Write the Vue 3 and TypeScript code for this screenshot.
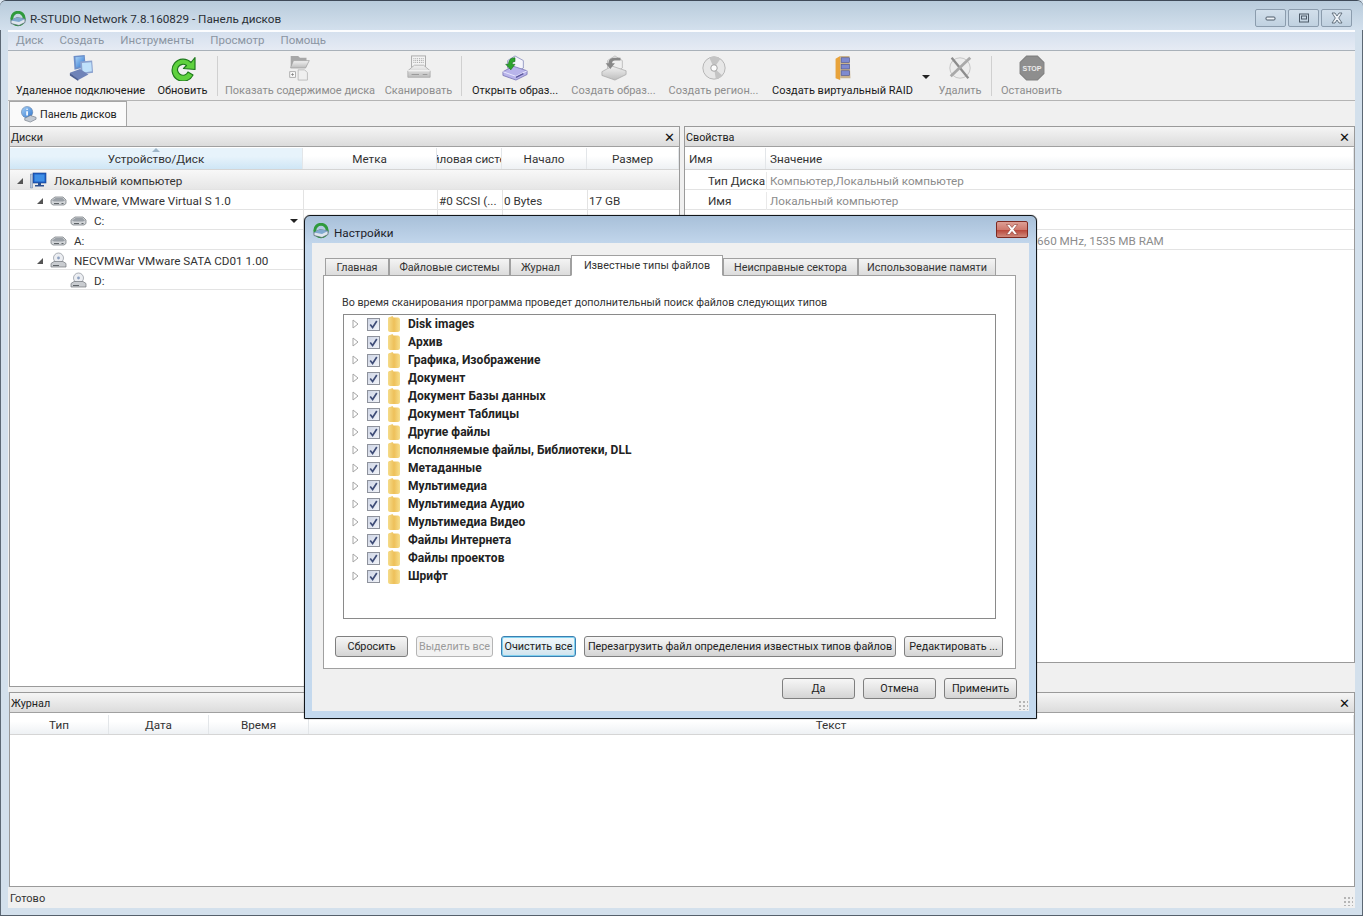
<script setup lang="ts">
interface ToolItem {
  label?: string
  icon?: string
  width: number
  off?: boolean
  kind?: 'sep' | 'arrow'
}

interface DiskRow {
  name: string
  icon?: string
  level: number
  open?: boolean
  cells?: string[]
  dropdown?: boolean
  head?: boolean
}

const menu = ['Диск', 'Создать', 'Инструменты', 'Просмотр', 'Помощь']

const tools: ToolItem[] = [
  { label: 'Удаленное подключение', icon: 'i-remote', width: 141 },
  { label: 'Обновить', icon: 'i-refresh', width: 63 },
  { kind: 'sep', width: 7 },
  { label: 'Показать содержимое диска', icon: 'i-show', width: 158, off: true },
  { label: 'Сканировать', icon: 'i-scan', width: 79, off: true },
  { kind: 'sep', width: 7 },
  { label: 'Открыть образ...', icon: 'i-open', width: 100 },
  { label: 'Создать образ...', icon: 'i-image', width: 97, off: true },
  { label: 'Создать регион...', icon: 'i-disc', width: 103, off: true },
  { label: 'Создать виртуальный RAID', icon: 'i-raid', width: 155 },
  { kind: 'arrow', width: 12 },
  { label: 'Удалить', icon: 'i-delete', width: 56, off: true },
  { kind: 'sep', width: 7 },
  { label: 'Остановить', icon: 'i-stop', width: 73, off: true },
]

const diskRows: DiskRow[] = [
  { name: 'Локальный компьютер', icon: 'i-monitor', level: 0, open: true, head: true },
  { name: 'VMware, VMware Virtual S 1.0', icon: 'i-hdd', level: 1, open: true, cells: ['', '#0 SCSI (...', '0 Bytes', '17 GB'] },
  { name: 'C:', icon: 'i-hdd', level: 2, dropdown: true },
  { name: 'A:', icon: 'i-hdd', level: 1 },
  { name: 'NECVMWar VMware SATA CD01 1.00', icon: 'i-cd', level: 1, open: true },
  { name: 'D:', icon: 'i-cd', level: 2 },
]

const dialogTabs = [
  { label: 'Главная', width: 64 },
  { label: 'Файловые системы', width: 121 },
  { label: 'Журнал', width: 61 },
  { label: 'Известные типы файлов', width: 152, active: true },
  { label: 'Неисправные сектора', width: 135 },
  { label: 'Использование памяти', width: 138 },
]

const fileTypes = [
  'Disk images',
  'Архив',
  'Графика, Изображение',
  'Документ',
  'Документ Базы данных',
  'Документ Таблицы',
  'Другие файлы',
  'Исполняемые файлы, Библиотеки, DLL',
  'Метаданные',
  'Мультимедиа',
  'Мультимедиа Аудио',
  'Мультимедиа Видео',
  'Файлы Интернета',
  'Файлы проектов',
  'Шрифт',
]

const listButtons = [
  { label: 'Сбросить', width: 73 },
  { label: 'Выделить все', width: 77, off: true },
  { label: 'Очистить все', width: 75, focus: true },
  { label: 'Перезагрузить файл определения известных типов файлов', width: 312 },
  { label: 'Редактировать ...', width: 99 },
]
</script>

<template>
  <div class="window">
    <svg class="defs" aria-hidden="true">
      <defs>
        <linearGradient id="g-grey" x1="0" y1="0" x2="0" y2="1">
          <stop offset="0" stop-color="#f2f2f2" />
          <stop offset="1" stop-color="#b5b5b5" />
        </linearGradient>
        <linearGradient id="g-folder" x1="0" y1="0" x2="1" y2="0">
          <stop offset="0" stop-color="#f5dc8a" />
          <stop offset="0.5" stop-color="#eec05a" />
          <stop offset="1" stop-color="#f6de8c" />
        </linearGradient>
        <linearGradient id="g-check" x1="0" y1="0" x2="1" y2="1">
          <stop offset="0" stop-color="#cdd4e4" />
          <stop offset="1" stop-color="#f3f5fa" />
        </linearGradient>
        <linearGradient id="g-blue" x1="0" y1="0" x2="1" y2="1">
          <stop offset="0" stop-color="#a9d2f7" />
          <stop offset="1" stop-color="#2f76cf" />
        </linearGradient>
      </defs>

      <symbol id="i-app" viewBox="0 0 16 16">
        <circle cx="8" cy="7.500" r="6.200" fill="none" stroke="#2f9a3c" stroke-width="3" />
        <path d="M1 9.500l6-3 8 1.500v3.500l-6 3-8-2z" fill="#dfe6ee" stroke="#51606e" stroke-width=".7" />
        <path d="M7 6.500l8 1.500-6 3-8-1.500z" fill="#7fa9cf" />
      </symbol>

      <symbol id="i-remote" viewBox="0 0 28 28">
        <path d="M6 1l12-1 1 13-12 3z" fill="#6c8fc9" />
        <path d="M8 2.500l9-.8 .7 9.800-9 2z" fill="url(#g-blue)" />
        <path d="M13 7l13-1 1 13-13 2z" fill="#8ba2cf" />
        <path d="M15 8.500l10-.8 .7 9.800-10 1.600z" fill="#bfe1fb" />
        <path d="M2 19l11-4 9 6-11 6z" fill="#6f83b8" />
        <path d="M2 19v3l9 6v-2z" fill="#4d5f92" />
      </symbol>

      <symbol id="i-refresh" viewBox="0 0 26 26">
        <path d="M21 7.500A11 11 0 1 0 23 20l-5-3a5.500 5.500 0 1 1-1.500-6.500l-3 3L25 14.500V2.500z" fill="#5fd23e" stroke="#1f7a1d" stroke-width="1.200" stroke-linejoin="round" />
      </symbol>

      <symbol id="i-show" viewBox="0 0 28 28">
        <path d="M4 1h8l2 2h7v9H4z" fill="#9b9b9b" />
        <path d="M4 13l3-7h17l-4 8H4z" fill="url(#g-grey)" stroke="#8a8a8a" stroke-width=".7" />
        <rect x="3" y="18" width="6" height="6" fill="#fff" stroke="#888" stroke-width=".8" />
        <path d="M4.500 21h3M6 19.500v3" stroke="#666" stroke-width=".8" />
        <path d="M12 16h7l3 3v8H12z" fill="#efefef" stroke="#a5a5a5" stroke-width=".8" />
      </symbol>

      <symbol id="i-scan" viewBox="0 0 28 28">
        <rect x="6" y="1" width="15" height="12" fill="#f4f4f4" stroke="#9b9b9b" />
        <path d="M8 4h11M8 6h11M8 8h11" stroke="#8b8b8b" stroke-dasharray="1 1" />
        <path d="M2 17l7-6h10l7 6v7H2z" fill="url(#g-grey)" stroke="#9a9a9a" stroke-width=".8" />
        <path d="M2 17h24" stroke="#fff" />
        <path d="M6 21h8M18 21h5" stroke="#888" />
      </symbol>

      <symbol id="i-open" viewBox="0 0 28 28">
        <path d="M6 6l8-5 9 5v8L14 19 6 14z" fill="#f4f4fb" stroke="#7f85b8" stroke-width=".8" />
        <path d="M1 18l11-6 15 5v4l-12 6-14-5z" fill="#b8b4ea" stroke="#6f6bb0" stroke-width=".8" />
        <path d="M1 18l14 5 12-6" fill="none" stroke="#eceaff" />
        <path d="M15 24l8-4" stroke="#5a569c" stroke-width="1.500" />
        <path d="M14 3c-5 0-7 3-7 7H4l5.500 6L14 10h-3c0-2 1-3 3-3z" fill="#2ea52e" stroke="#14691a" stroke-width=".6" />
      </symbol>

      <symbol id="i-image" viewBox="0 0 28 28">
        <path d="M7 6l8-5 8 5v8l-8 5-8-5z" fill="#efefef" stroke="#a8a8a8" stroke-width=".8" />
        <path d="M1 18l11-6 15 5v4l-12 6-14-5z" fill="url(#g-grey)" stroke="#9c9c9c" stroke-width=".8" />
        <path d="M14 3c4 0 6 3 6 6h3l-5 6-5-6h3c0-2-1-3-3-3H7V3z" fill="#777" transform="matrix(-1 0 0 1 28 0)" />
      </symbol>

      <symbol id="i-disc" viewBox="0 0 28 28">
        <circle cx="14" cy="14" r="12" fill="#e6e6e6" stroke="#a9a9a9" />
        <path d="M14 14L9 3a12 12 0 0 1 12 1zM14 14l9 8a12 12 0 0 1-7 4z" fill="#bdbdbd" />
        <circle cx="14" cy="14" r="3.500" fill="#fff" stroke="#8f8f8f" />
      </symbol>

      <symbol id="i-raid" viewBox="0 0 28 28">
        <path d="M6 4l5-3v26l-5-2z" fill="#e8a33b" />
        <path d="M11 1h10l1 24H11z" fill="#c9b28c" />
        <rect x="12" y="3" width="9" height="5" fill="#7e8ad0" stroke="#474f8f" stroke-width=".6" />
        <rect x="12" y="10" width="9" height="5" fill="#7e8ad0" stroke="#474f8f" stroke-width=".6" />
        <rect x="12" y="17" width="9" height="5" fill="#7e8ad0" stroke="#474f8f" stroke-width=".6" />
      </symbol>

      <symbol id="i-delete" viewBox="0 0 28 28">
        <circle cx="14" cy="14" r="11" fill="#ededed" stroke="#bcbcbc" />
        <path d="M5 3l18 22" stroke="#7c7c7c" stroke-width="2.500" />
        <path d="M25 3L4 23" stroke="#9d9d9d" stroke-width="3" />
      </symbol>

      <symbol id="i-stop" viewBox="0 0 24 24">
        <path d="M7 1h10l6 6v10l-6 6H7l-6-6V7z" fill="#7e7e7e" stroke="#6e6e6e" />
        <text x="12" y="14.500" text-anchor="middle" class="stop-text">STOP</text>
      </symbol>

      <symbol id="i-panel" viewBox="0 0 18 18">
        <circle cx="7.500" cy="6.500" r="6" fill="url(#g-blue)" stroke="#5f7fa8" stroke-width=".6" />
        <path d="M7.500 3v1M7.500 5.500V10" stroke="#fff" stroke-width="1.800" />
        <path d="M5 13l6-3 6 2v2l-6 3-6-2z" fill="#c3cad3" stroke="#66707c" stroke-width=".6" />
      </symbol>

      <symbol id="i-monitor" viewBox="0 0 17 17">
        <rect x="3" y="1" width="13" height="10" fill="#1f5fc4" stroke="#123d8a" stroke-width=".6" />
        <rect x="4.500" y="2.500" width="10" height="7" fill="#3f8fe6" />
        <path d="M8 11h3v2H8zM5 13h9v1.500H5z" fill="#2a4f8f" />
        <path d="M.5 2h2v14h-2z" fill="#b7c7de" stroke="#6a7e9e" stroke-width=".5" />
      </symbol>

      <symbol id="i-hdd" viewBox="0 0 17 13">
        <path d="M1 6l4-3h8l3 3v3.500l-2 1.500H3L1 9.500z" fill="#d2d5d8" stroke="#6f7478" stroke-width=".7" />
        <path d="M2 6.500l3.500-2.500h7l2.500 2.500-2 1H4z" fill="#9aa0a6" />
        <path d="M4 9.500h5" stroke="#5f6468" />
        <path d="M11.500 9.500h2" stroke="#5f6468" />
      </symbol>

      <symbol id="i-cd" viewBox="0 0 17 17">
        <circle cx="8.500" cy="6" r="5" fill="#eceef2" stroke="#8b9199" stroke-width=".7" />
        <circle cx="8.500" cy="6" r="1.400" fill="#8ea1c0" />
        <path d="M1 11.500l3-2h9l3 2V15H1z" fill="#c9ccd0" stroke="#72777c" stroke-width=".7" />
        <path d="M3 13.500h6" stroke="#5f6468" />
      </symbol>

      <symbol id="i-folder" viewBox="0 0 13 16">
        <path d="M1 2.500C1 1.500 2 1 3 1l2.500-1 1 1.500H11c1 0 2 1 2 2V14c0 1-1 2-2 2H3c-1 0-2-1-2-2z" fill="url(#g-folder)" />
      </symbol>
    </svg>

    <header class="titlebar">
      <svg class="title-icon"><use href="#i-app" /></svg>
      <span class="title-text">R-STUDIO Network 7.8.160829 - Панель дисков</span>
      <div class="caption">
        <span class="cap-btn">
          <svg width="12" height="8" viewBox="0 0 12 8"><rect x="1" y="3" width="9" height="3" rx="1" fill="#eef3f8" stroke="#4c5a68" /></svg>
        </span>
        <span class="cap-btn">
          <svg width="12" height="10" viewBox="0 0 12 10"><rect x="1.500" y="1" width="9" height="8" fill="none" stroke="#4c5a68" /><rect x="3.500" y="3" width="5" height="3" fill="none" stroke="#4c5a68" /></svg>
        </span>
        <span class="cap-btn">
          <svg width="14" height="12" viewBox="0 0 14 12"><path d="M2 1h3l2 3 2-3h3L8.700 6 12 11H9L7 8l-2 3H2l3.300-5z" fill="#eef3f8" stroke="#4c5a68" stroke-width=".8" /></svg>
        </span>
      </div>
    </header>

    <nav class="menubar">
      <span v-for="item in menu" :key="item">{{ item }}</span>
    </nav>

    <div class="toolbar">
      <template v-for="(tool, i) in tools" :key="i">
        <span v-if="tool.kind === 'sep'" class="tool-sep" :style="{ width: tool.width + 'px' }"><i /></span>
        <span v-else-if="tool.kind === 'arrow'" class="tool-arrow" :style="{ width: tool.width + 'px' }"><i class="tri" /></span>
        <div v-else class="tool" :class="{ off: tool.off }" :style="{ width: tool.width + 'px' }">
          <svg class="tool-icon"><use :href="'#' + tool.icon" /></svg>
          <span>{{ tool.label }}</span>
        </div>
      </template>
    </div>

    <div class="doc-tabs">
      <div class="doc-tab">
        <svg class="doc-tab-icon"><use href="#i-panel" /></svg>
        Панель дисков
      </div>
    </div>

    <main class="workspace">
      <section class="panel disks">
        <div class="panel-head">
          <span>Диски</span>
          <b class="panel-x">✕</b>
        </div>
        <div class="grid-head disks-cols">
          <span class="sorted"><i class="sort-mark" />Устройство/Диск</span>
          <span>Метка</span>
          <span>Файловая система</span>
          <span>Начало</span>
          <span>Размер</span>
        </div>
        <div
          v-for="row in diskRows"
          :key="row.name"
          class="disks-cols disk-row"
          :class="{ head: row.head }"
        >
          <div class="disk-name" :class="'lvl' + row.level">
            <i class="twisty" :class="{ hide: !row.open }" />
            <svg class="row-icon"><use :href="'#' + row.icon" /></svg>
            <span>{{ row.name }}</span>
            <i v-if="row.dropdown" class="tri row-drop" />
          </div>
          <template v-if="!row.head">
            <span v-for="n in 4" :key="n" class="disk-cell">{{ row.cells ? row.cells[n - 1] : '' }}</span>
          </template>
        </div>
      </section>

      <section class="panel props">
        <div class="panel-head">
          <span>Свойства</span>
          <b class="panel-x">✕</b>
        </div>
        <div class="grid-head props-cols">
          <span>Имя</span>
          <span>Значение</span>
        </div>
        <div class="props-cols prop-row"><span class="prop-key">Тип Диска</span><span class="prop-val">Компьютер,Локальный компьютер</span></div>
        <div class="props-cols prop-row"><span class="prop-key">Имя</span><span class="prop-val">Локальный компьютер</span></div>
        <div class="props-cols prop-row"><span /><span /></div>
        <div class="props-cols prop-row"><span /><span class="prop-val prop-far">660 MHz, 1535 MB RAM</span></div>
      </section>
    </main>

    <section class="panel journal">
      <div class="panel-head">
        <span>Журнал</span>
        <b class="panel-x">✕</b>
      </div>
      <div class="grid-head journal-cols">
        <span>Тип</span>
        <span>Дата</span>
        <span>Время</span>
        <span>Текст</span>
      </div>
    </section>

    <footer class="statusbar">
      <span>Готово</span>
      <i class="grip" />
    </footer>

    <div class="dialog">
      <div class="dlg-title">
        <svg class="dlg-icon"><use href="#i-app" /></svg>
        <span>Настройки</span>
        <span class="dlg-close">
          <svg width="14" height="11" viewBox="0 0 14 11"><path d="M1.500 .5h3L7 3.500 9.500.5h3L8.700 5.500l3.800 5h-3L7 7.500l-2.500 3h-3l3.800-5z" fill="#fff" stroke="#8c3a30" stroke-width=".6" /></svg>
        </span>
      </div>
      <div class="dlg-client">
        <div class="dlg-tabs">
          <span
            v-for="tab in dialogTabs"
            :key="tab.label"
            class="dlg-tab"
            :class="{ active: tab.active }"
            :style="{ width: tab.width + 'px' }"
          >{{ tab.label }}</span>
        </div>
        <div class="dlg-page">
          <p class="dlg-hint">Во время сканирования программа проведет дополнительный поиск файлов следующих типов</p>
          <div class="type-list">
            <div v-for="type in fileTypes" :key="type" class="type-row">
              <svg class="type-twisty" viewBox="0 0 7 10"><path d="M1 1l5 4-5 4z" fill="#fff" stroke="#a5a5a5" /></svg>
              <svg class="check" viewBox="0 0 13 13">
                <rect x=".5" y=".5" width="12" height="12" fill="url(#g-check)" stroke="#8e929c" />
                <path d="M3.200 6.500l2.400 3L9.800 3" fill="none" stroke="#3f4d78" stroke-width="1.700" />
              </svg>
              <svg class="folder"><use href="#i-folder" /></svg>
              <b>{{ type }}</b>
            </div>
          </div>
          <div class="list-buttons">
            <button
              v-for="btn in listButtons"
              :key="btn.label"
              type="button"
              class="btn"
              :class="{ off: btn.off, focus: btn.focus }"
              :style="{ width: btn.width + 'px' }"
            >{{ btn.label }}</button>
          </div>
        </div>
        <div class="dlg-actions">
          <button type="button" class="btn wide">Да</button>
          <button type="button" class="btn wide">Отмена</button>
          <button type="button" class="btn wide">Применить</button>
        </div>
        <i class="grip dlg-grip" />
      </div>
    </div>
  </div>
</template>

<style>
html,
body {
  margin: 0;
  background: #dbe6f0;
}
</style>

<style scoped>
.window {
  position: relative;
  display: flex;
  flex-direction: column;
  width: 1363px;
  height: 916px;
  box-sizing: border-box;
  overflow: hidden;
  padding-bottom: 7px;
  border-top: 1px solid #3f4a58;
  border-bottom: 1px solid #55606c;
  border-radius: 6px 6px 0 0;
  background: #d3e0ec;
  font-family: Roboto, "Liberation Sans", sans-serif;
  font-size: 11.7px;
  color: #222;
  box-shadow: inset 1px 0 #5c6874, inset -1px 0 #5c6874;
}

.defs {
  position: absolute;
  width: 0;
  height: 0;
}

.stop-text {
  font: 700 6.5px "Liberation Sans", sans-serif;
  fill: #e9e9e9;
}

.titlebar {
  display: flex;
  align-items: center;
  height: 29px;
  padding: 6px 11px 0 10px;
  box-sizing: border-box;
  flex-shrink: 0;
  background: linear-gradient(#b8cbdb, #d3e0ed);
}

.title-icon {
  width: 16px;
  height: 16px;
  margin-right: 4px;
}

.title-text {
  flex: 1;
  color: #2a2f36;
}

.caption {
  display: flex;
  gap: 2px;
  margin-top: -1px;
}

.cap-btn {
  display: flex;
  align-items: center;
  justify-content: center;
  width: 29px;
  height: 16px;
  border: 1px solid #8b9cad;
  border-radius: 2px;
  background: linear-gradient(#d2dfeb, #c0d1e0);
}

.menubar {
  display: flex;
  gap: 16px;
  align-items: center;
  height: 21px;
  margin: 0 8px;
  padding: 0 8px 2px;
  box-sizing: border-box;
  border-top: 2px solid #fbfcfe;
  border-bottom: 1px solid #a9b1b9;
  flex-shrink: 0;
  background: linear-gradient(#d5e0ee, #e6ebf4);
  color: #8b95a2;
  font-size: 11.5px;
}

.toolbar {
  display: flex;
  height: 50px;
  margin: 0 8px;
  padding-left: 2px;
  box-sizing: border-box;
  border-bottom: 1px solid #b4b4b4;
  flex-shrink: 0;
  background: #f0f0f0;
}

.tool {
  display: flex;
  flex-direction: column;
  align-items: center;
  padding-top: 4px;
  font-size: 11px;
  white-space: nowrap;
  color: #1b1b1b;
}

.tool.off {
  color: #8d8d8d;
}

.tool-icon {
  width: 26px;
  height: 26px;
  margin-bottom: 3px;
}

.tool.off .tool-icon {
  opacity: 0.85;
}

.tool-sep {
  display: flex;
  justify-content: center;
  padding-top: 5px;
  box-sizing: border-box;
}

.tool-sep i {
  width: 1px;
  height: 40px;
  background: #d0d0d0;
}

.tool-arrow {
  display: flex;
  justify-content: center;
  padding-top: 24px;
  box-sizing: border-box;
}

.tri {
  display: block;
  width: 0;
  height: 0;
  border-style: solid;
  border-width: 4px 4px 0;
  border-color: #222 transparent transparent;
}

.doc-tabs {
  display: flex;
  height: 25px;
  margin: 0 8px;
  flex-shrink: 0;
  background: #f0f0f0;
}

.doc-tab {
  display: flex;
  align-items: center;
  width: 118px;
  margin-left: 1px;
  padding-left: 10px;
  box-sizing: border-box;
  border: 1px solid #a6a6a6;
  border-bottom: 0;
  background: #fafafa;
  color: #222;
  font-size: 10.8px;
  white-space: nowrap;
}

.doc-tab-icon {
  width: 17px;
  height: 17px;
  margin-right: 3px;
}

.workspace {
  display: flex;
  align-items: flex-start;
  gap: 4px;
  margin: 0 8px 0 9px;
  height: 566px;
  flex-shrink: 0;
  background: #f0f0f0;
  box-shadow: -1px 0 #f0f0f0;
}

.panel {
  display: flex;
  flex-direction: column;
  box-sizing: border-box;
  border: 1px solid #9a9a9a;
  background: #fff;
}

.disks {
  width: 671px;
  height: 561px;
}

.props {
  flex: 1;
  height: 537px;
}

.panel-head {
  display: flex;
  align-items: center;
  justify-content: space-between;
  height: 20px;
  padding: 1px 4px 0 1px;
  box-sizing: border-box;
  border-bottom: 1px solid #a0a0a0;
  flex-shrink: 0;
  background: linear-gradient(#f5f5f5, #dcdcdc);
  color: #222;
  font-size: 10.8px;
}

.panel-x {
  font: 700 13px "DejaVu Sans", sans-serif;
  color: #111;
}

.grid-head {
  display: grid;
  height: 23px;
  padding-top: 1px;
  box-sizing: border-box;
  border-bottom: 1px solid #d5d5d5;
  flex-shrink: 0;
  background: linear-gradient(#fff 40%, #eef1f4);
}

.grid-head > span {
  position: relative;
  display: flex;
  align-items: center;
  justify-content: center;
  overflow: hidden;
  border-right: 1px solid #e3e6e9;
  white-space: nowrap;
  color: #333;
}

.disks-cols {
  display: grid;
  grid-template-columns: 293px 134px 65px 85px 1fr;
}

.props-cols {
  display: grid;
  grid-template-columns: 81px 1fr;
}

.grid-head.journal-cols {
  height: 22px;
  padding-top: 2px;
  grid-template-columns: 99px 100px 100px 1fr;
}

.grid-head.props-cols > span {
  justify-content: flex-start;
  padding-left: 4px;
}

.grid-head > .sorted {
  background: linear-gradient(#e7f3fb 40%, #cfe6f5);
}

.sort-mark {
  position: absolute;
  top: 0;
  left: 50%;
  width: 0;
  height: 0;
  margin-left: -4px;
  border-style: solid;
  border-width: 0 4px 4px;
  border-color: transparent transparent #9fb6c8;
}

.disk-row {
  height: 20px;
  padding-top: 2px;
  box-sizing: border-box;
  border-bottom: 1px solid #e3e3e3;
  color: #333;
}

.disk-row.head {
  display: block;
  background: linear-gradient(#f8f8f8, #e6e6e6);
}

.disk-name {
  position: relative;
  display: flex;
  align-items: center;
  white-space: nowrap;
}

.disk-cell {
  display: flex;
  align-items: center;
  margin-top: -2px;
  padding: 2px 0 0 1px;
  border-left: 1px solid #e3e3e3;
  overflow: hidden;
  white-space: nowrap;
}

.disk-row.head .disk-name {
  height: 17px;
}

.twisty {
  width: 0;
  height: 0;
  margin-right: 7px;
  border-style: solid;
  border-width: 0 0 6px 6px;
  border-color: transparent transparent #555;
}

.twisty.hide {
  visibility: hidden;
}

.lvl0 {
  padding-left: 7px;
}

.lvl1 {
  padding-left: 27px;
}

.lvl2 {
  padding-left: 47px;
}

.row-icon {
  width: 17px;
  height: 17px;
  margin-right: 7px;
  flex-shrink: 0;
}

.row-drop {
  position: absolute;
  top: 7px;
  right: 5px;
}

.prop-row {
  height: 20px;
  padding-top: 2px;
  box-sizing: border-box;
  border-bottom: 1px solid #e3e3e3;
  line-height: 18px;
}

.prop-key {
  padding-left: 23px;
  color: #333;
  white-space: nowrap;
}

.prop-val {
  padding-left: 3px;
  border-left: 1px solid #e9e9e9;
  color: #8c8c8c;
  white-space: nowrap;
}

.prop-far {
  padding-left: 270px;
}

.journal {
  height: 195px;
  margin: 0 8px 0 9px;
  flex-shrink: 0;
}

.statusbar {
  position: relative;
  display: flex;
  align-items: center;
  flex: 1;
  margin: 0 8px;
  padding: 2px 0 0 2px;
  background: #f0f0f0;
  color: #333;
  font-size: 11px;
}

.grip {
  position: absolute;
  right: 2px;
  bottom: 2px;
  width: 10px;
  height: 10px;
  background-image: radial-gradient(#b5b5b5 1px, transparent 1.2px);
  background-size: 4px 4px;
}

.dialog {
  position: absolute;
  left: 304px;
  top: 214px;
  display: flex;
  flex-direction: column;
  width: 733px;
  height: 504px;
  box-sizing: border-box;
  padding: 0 7px 7px;
  border: 1px solid #12161a;
  border-radius: 6px 6px 0 0;
  background: linear-gradient(#a8c0d9, #c4d8ed 6%, #c4d9ee);
  box-shadow: 0 0 1px #333;
}

.dlg-title {
  display: flex;
  align-items: center;
  height: 27px;
  flex-shrink: 0;
  color: #1d2229;
}

.dlg-icon {
  width: 16px;
  height: 16px;
  margin: 3px 5px 0 1px;
}

.dlg-title > span:first-of-type {
  margin-top: 7px;
}

.dlg-close {
  display: flex;
  align-items: center;
  justify-content: center;
  width: 32px;
  height: 17px;
  margin-left: auto;
  margin-right: 1px;
  margin-top: -1px;
  box-sizing: border-box;
  border: 1px solid #7c2a22;
  border-radius: 2px;
  background: linear-gradient(#dd9f95, #cf7a6e 50%, #b9483b 55%, #d08a7c);
}

.dlg-client {
  position: relative;
  flex: 1;
  padding: 12px 13px 0 11px;
  background: #f0f0f0;
}

.dlg-tabs {
  position: relative;
  z-index: 1;
  display: flex;
  align-items: flex-end;
  height: 21px;
  padding-left: 2px;
}

.dlg-tab {
  display: flex;
  align-items: center;
  justify-content: center;
  height: 18px;
  box-sizing: border-box;
  border: 1px solid #a0a0a0;
  background: linear-gradient(#f4f4f4, #dcdcdc);
  font-size: 10.8px;
  white-space: nowrap;
  color: #333;
}

.dlg-tab.active {
  height: 21px;
  border-bottom-color: #fff;
  background: #fff;
}

.dlg-page {
  margin-top: -1px;
  height: 394px;
  padding: 0 19px;
  box-sizing: border-box;
  border: 1px solid #a0a0a0;
  background: #fff;
}

.dlg-hint {
  margin: 18px 0 3px -1px;
  height: 17px;
  font-size: 10.7px;
  line-height: 17px;
  color: #333;
  white-space: nowrap;
}

.type-list {
  width: 653px;
  height: 305px;
  box-sizing: border-box;
  border: 1px solid #8a8a8a;
}

.type-row {
  display: flex;
  align-items: center;
  height: 18px;
}

.type-twisty {
  width: 7px;
  height: 10px;
  margin-left: 8px;
  margin-right: 8px;
}

.check {
  width: 13px;
  height: 13px;
  margin-right: 7px;
}

.folder {
  width: 13px;
  height: 16px;
  margin-right: 8px;
}

.type-row b {
  font-size: 12px;
  font-weight: 700;
  letter-spacing: 0.05px;
  color: #222;
  white-space: nowrap;
}

.list-buttons {
  display: flex;
  gap: 8px;
  margin: 17px 0 0 -8px;
}

.btn {
  flex-shrink: 0;
  height: 21px;
  padding: 0;
  box-sizing: border-box;
  border: 1px solid #7f7f7f;
  border-radius: 3px;
  background: linear-gradient(#f6f6f6, #e6e6e6 50%, #d4d4d4);
  font: 10.8px Roboto, "Liberation Sans", sans-serif;
  color: #222;
  white-space: nowrap;
}

.btn.off {
  border-color: #b5b5b5;
  background: #f2f2f2;
  color: #9a9a9a;
}

.btn.focus {
  border-color: #3c7fb1;
  box-shadow: inset 0 0 0 1px #7fd1ef;
  background: linear-gradient(#f2f8fb, #e2eff5 50%, #cfe3ee);
}

.btn.wide {
  width: 73px;
}

.dlg-actions {
  display: flex;
  justify-content: flex-end;
  gap: 8px;
  margin: 9px -1px 0 0;
}

.dlg-grip {
  right: 1px;
  bottom: 1px;
}
</style>
